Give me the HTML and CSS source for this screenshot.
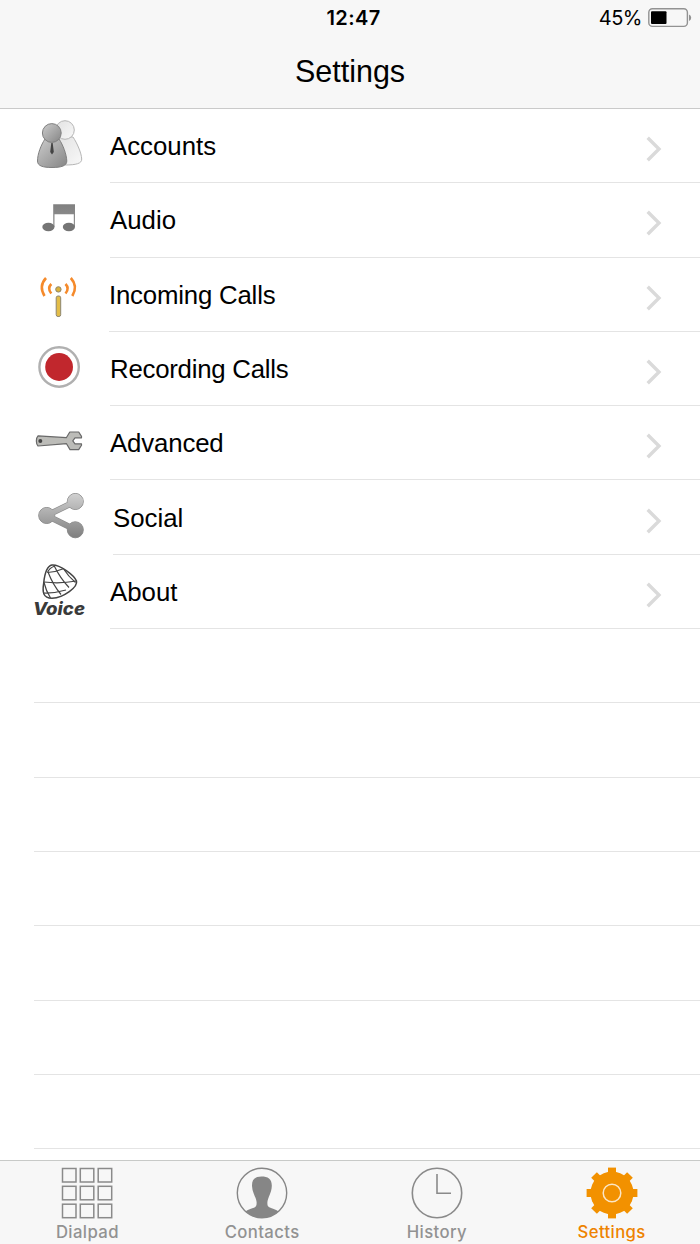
FILE: index.html
```html
<!DOCTYPE html>
<html lang="en">

<head>
    <meta charset="UTF-8">
    <meta name="viewport" content="width=device-width, initial-scale=1.0">
    <title>Settings</title>
    <link rel="stylesheet" href="styles.css">
</head>

<body>
    <div class="screen">
        <header>
            <div class="status-bar">
                <span class="time">12:47</span>
                <div class="power">
                    <span>45%</span>
                    <svg class="battery" width="44" height="20" viewBox="0 0 44 20">
                        <rect x="0.8" y="0.8" width="38.6" height="17.6" rx="3.6" fill="none" stroke="#929292" stroke-width="1.4"/>
                        <rect x="3" y="3.2" width="15.5" height="12.8" rx="1" fill="#000"/>
                        <path d="M41 6.5 Q43.2 7.4 43.2 9.7 Q43.2 12 41 12.9 Z" fill="#929292"/>
                    </svg>
                </div>
            </div>
            <h1>Settings</h1>
        </header>

        <!-- Settings list -->
        <ul class="list">
            <li class="row">
                <svg class="icon" viewBox="0 0 60 74">
                    <defs>
                        <linearGradient id="front" x1="0" y1="0" x2="1" y2="1">
                            <stop offset="0" stop-color="#ccc"/>
                            <stop offset="1" stop-color="#858585"/>
                        </linearGradient>
                        <linearGradient id="back" x1="0" y1="0" x2="1" y2="1">
                            <stop offset="0" stop-color="#e2e2e2"/>
                            <stop offset="1" stop-color="#f8f8f8"/>
                        </linearGradient>
                    </defs>
                    <path d="M28 28 L43 28 C47 34 51.5 44 51.7 50 C52 54.5 46 56 35 56 Z" fill="url(#back)" stroke="#b5b5b5"/>
                    <circle cx="35" cy="21" r="9.3" fill="url(#back)" stroke="#b5b5b5"/>
                    <path d="M15 30 C11 36 7.5 45 7.5 52 C7.5 57 13 58.5 22 58.5 C31 58.5 36.8 57 36.8 52 C36.5 45 33 36 29 30 Z" fill="url(#front)" stroke="#808080"/>
                    <circle cx="21.8" cy="24" r="9.4" fill="url(#front)" stroke="#808080"/>
                    <path d="M21.3 34 H22.7 L23.8 43 L22 45.5 L20.2 43 Z" fill="#444"/>
                </svg>
                <div class="cell">Accounts<svg class="chevron" viewBox="0 0 16 26"><path d="M1.7 1.7 L13 13 L1.7 24.3"/></svg></div>
            </li>
            <li class="row">
                <svg class="icon" viewBox="0 0 60 74">
                    <defs>
                        <linearGradient id="note" x1="0" y1="0" x2="0" y2="1">
                            <stop offset="0" stop-color="#808080"/>
                            <stop offset="1" stop-color="#939393"/>
                        </linearGradient>
                    </defs>
                    <path d="M23.2 21.2 H45 V44 H43.8 V31.2 H24.5 V44 H23.2 Z" fill="url(#note)"/>
                    <ellipse cx="18.4" cy="44" rx="6.1" ry="4.2" fill="#757575"/>
                    <ellipse cx="38.9" cy="44" rx="6.1" ry="4.2" fill="#757575"/>
                </svg>
                <div class="cell">Audio<svg class="chevron" viewBox="0 0 16 26"><path d="M1.7 1.7 L13 13 L1.7 24.3"/></svg></div>
            </li>
            <li class="row incoming">
                <svg class="icon" viewBox="0 0 60 74">
                    <g fill="none" stroke="#f58a2b" stroke-width="2.6">
                        <path d="M21.3 26 Q17 30.5 21.3 35.5"/>
                        <path d="M35.5 26 Q39.8 30.5 35.5 35.5"/>
                        <path d="M16 20 Q8.5 28 14.5 38"/>
                        <path d="M40.8 20 Q48.3 28 42.3 38"/>
                    </g>
                    <circle cx="28.4" cy="31.4" r="2.7" fill="#d9b23c" stroke="#8d8570"/>
                    <rect x="26.2" y="38" width="4.5" height="20.5" rx="1.8" fill="#e3bd48" stroke="#8d8570"/>
                </svg>
                <div class="cell">Incoming Calls<svg class="chevron" viewBox="0 0 16 26"><path d="M1.7 1.7 L13 13 L1.7 24.3"/></svg></div>
            </li>
            <li class="row recording">
                <svg class="icon" viewBox="0 0 60 74">
                    <circle cx="29.1" cy="35" r="19.7" fill="#fff" stroke="#b0b0b0" stroke-width="2.4"/>
                    <circle cx="29.1" cy="35" r="13.9" fill="#c1272d"/>
                </svg>
                <div class="cell">Recording Calls<svg class="chevron" viewBox="0 0 16 26"><path d="M1.7 1.7 L13 13 L1.7 24.3"/></svg></div>
            </li>
            <li class="row advanced">
                <svg class="icon" viewBox="0 0 60 74">
                    <path d="M8 29.8 L36.3 31.7 L39.8 26 H48.7 L51.5 30.4 V31.8 H45 L42.8 34.8 L45 37.8 H51.5 V39.2 L48.7 43.6 H40 L36.5 37.7 L8 40 C5.8 38 5.8 32 8 29.8 Z" fill="#bcbcb8" stroke="#696969" stroke-width="1.2" stroke-linejoin="round"/>
                    <circle cx="10.3" cy="34.9" r="2" fill="#444"/>
                </svg>
                <div class="cell">Advanced<svg class="chevron" viewBox="0 0 16 26"><path d="M1.7 1.7 L13 13 L1.7 24.3"/></svg></div>
            </li>
            <li class="row social">
                <svg class="icon" viewBox="0 0 60 74">
                    <defs>
                        <linearGradient id="share" gradientUnits="userSpaceOnUse" x1="0" y1="13" x2="0" y2="58">
                            <stop offset="0" stop-color="#d2d2d2"/>
                            <stop offset="1" stop-color="#7e7e7e"/>
                        </linearGradient>
                    </defs>
                    <g fill="#8c8c8c" stroke="#8c8c8c">
                        <path d="M45.3 21.5 L16.7 35.5 L45.3 49.8" fill="none" stroke-width="6.2"/>
                        <circle cx="45.3" cy="21.5" r="8"/>
                        <circle cx="16.7" cy="35.5" r="8"/>
                        <circle cx="45.3" cy="49.8" r="8"/>
                    </g>
                    <g fill="url(#share)">
                        <path d="M45.3 21.5 L16.7 35.5 L45.3 49.8" fill="none" stroke="url(#share)" stroke-width="4.8"/>
                        <circle cx="45.3" cy="21.5" r="7.8"/>
                        <circle cx="16.7" cy="35.5" r="7.8"/>
                        <circle cx="45.3" cy="49.8" r="7.8"/>
                    </g>
                </svg>
                <div class="cell">Social<svg class="chevron" viewBox="0 0 16 26"><path d="M1.7 1.7 L13 13 L1.7 24.3"/></svg></div>
            </li>
            <li class="row">
                <svg class="icon" viewBox="0 0 60 74">
                    <g fill="none" stroke="#444" stroke-width="1.2">
                        <path d="M22 10 C30 9.5 44 20 46.5 26 C48 32 34 42.5 22 43.3 C13 43.3 12.2 37 13.7 28 C14.5 20 17 11 22 10 Z" stroke-width="1.5"/>
                        <path d="M17.5 17.5 Q26 17 34 13.5"/>
                        <path d="M14 27 Q30 29 46.5 26"/>
                        <path d="M13.3 38 Q24 38.5 36 35"/>
                        <path d="M24 10.5 Q30 23 39 32.5"/>
                        <path d="M18 17 Q23 30 31 39.5"/>
                        <path d="M14 27.5 Q16 36 20.5 43"/>
                        <path d="M34 14.5 Q38 21 45.5 27.5"/>
                        <path d="M17.5 17.5 Q19 13 25 11"/>
                    </g>
                    <text class="logo-text" x="3" y="60.2" textLength="52" lengthAdjust="spacingAndGlyphs">Voice</text>
                </svg>
                <div class="cell">About<svg class="chevron" viewBox="0 0 16 26"><path d="M1.7 1.7 L13 13 L1.7 24.3"/></svg></div>
            </li>
            <!-- Empty rows down to the tab bar -->
            <li class="row empty"></li>
            <li class="row empty"></li>
            <li class="row empty"></li>
            <li class="row empty"></li>
            <li class="row empty"></li>
            <li class="row empty"></li>
            <li class="row empty"></li>
        </ul>

        <nav class="tabs">
            <a class="tab">
                <svg viewBox="0 0 52 52">
                    <g fill="none" stroke="#8a8a8a" stroke-width="1.5">
                        <rect x="1.5" y="1.5" width="13.5" height="13.5"/>
                        <rect x="19.3" y="1.5" width="13.5" height="13.5"/>
                        <rect x="37.2" y="1.5" width="13.5" height="13.5"/>
                        <rect x="1.5" y="19.3" width="13.5" height="13.5"/>
                        <rect x="19.3" y="19.3" width="13.5" height="13.5"/>
                        <rect x="37.2" y="19.3" width="13.5" height="13.5"/>
                        <rect x="1.5" y="37.2" width="13.5" height="13.5"/>
                        <rect x="19.3" y="37.2" width="13.5" height="13.5"/>
                        <rect x="37.2" y="37.2" width="13.5" height="13.5"/>
                    </g>
                </svg>
                <span>Dialpad</span>
            </a>
            <a class="tab">
                <svg viewBox="0 0 52 52">
                    <circle cx="26" cy="26" r="24.7" fill="none" stroke="#868686" stroke-width="1.4"/>
                    <path d="M25.5 9.5 C32 9.5 36 12 35.8 19 C35.6 26 32 30 31.4 35 C31.2 39 32 40 35 41 C38 42 40 42.5 42.5 44.5 C38 48.5 32.5 50.7 26 50.7 C19.5 50.7 14 48.5 9.5 44.5 C12 42.5 14 42 17 41 C20 40 20.8 39 20.6 35 C20 30 16.3 26 16 19 C15.8 12 19.5 9.5 25.5 9.5 Z" fill="#868686"/>
                </svg>
                <span>Contacts</span>
            </a>
            <a class="tab">
                <svg viewBox="0 0 52 52">
                    <circle cx="26" cy="26" r="24.7" fill="none" stroke="#8a8a8a" stroke-width="1.6"/>
                    <path d="M26 7 V26.3 H40" fill="none" stroke="#8a8a8a" stroke-width="1.6"/>
                </svg>
                <span>History</span>
            </a>
            <a class="tab active">
                <svg viewBox="0 0 52 52">
                    <g fill="#f29100">
                        <circle cx="26" cy="26" r="21.5"/>
                        <rect x="22" y="0.6" width="8" height="50.8"/>
                        <rect x="0.6" y="22" width="50.8" height="8"/>
                        <rect x="22" y="0.6" width="8" height="50.8" transform="rotate(45 26 26)"/>
                        <rect x="22" y="0.6" width="8" height="50.8" transform="rotate(-45 26 26)"/>
                    </g>
                    <circle cx="26" cy="26" r="8.8" fill="none" stroke="#fbe6c6" stroke-width="1.5"/>
                </svg>
                <span>Settings</span>
            </a>
        </nav>
    </div>
</body>

</html>
```
FILE: styles.css
```css
* {
    box-sizing: border-box;
}

body {
    margin: 0;
    background-color: #fff;
    font-family: "Liberation Sans", Arial, sans-serif;
    color: #000;
}

.screen {
    display: flex;
    flex-direction: column;
    width: 700px;
    height: 1244px;
    overflow: hidden;
}

/* Header */
header {
    flex: none;
    height: 109px;
    background-color: #f7f7f7;
    border-bottom: 1px solid #cacaca;
}

.status-bar {
    display: grid;
    grid-template-columns: 1fr auto 1fr;
    align-items: center;
    height: 36px;
    padding: 0 8px 0 15px;
    font-family: Inter, sans-serif;
    font-size: 20px;
}

.time {
    grid-column: 2;
    font-weight: 600;
    letter-spacing: 0.4px;
}

.power {
    display: flex;
    justify-content: flex-end;
    align-items: center;
    gap: 6px;
    letter-spacing: -0.5px;
}

.battery {
    margin-top: -1px;
}

h1 {
    margin: 0;
    font-size: 30.5px;
    font-weight: normal;
    line-height: 70px;
    text-align: center;
}

/* List */
.list {
    flex: 1;
    min-height: 0;
    margin: 0;
    padding: 0;
    overflow: hidden;
    list-style: none;
}

.row {
    display: flex;
    height: 74.3px;
    padding-left: 30px;
}

.icon {
    flex: none;
    width: 60px;
    height: 74px;
    margin-right: 20px;
}

.cell {
    display: flex;
    flex: 1;
    justify-content: space-between;
    align-items: center;
    padding-top: 2px;
    padding-right: 38px;
    border-bottom: 1px solid #e4e4e4;
    font-size: 25.8px;
}

.incoming .icon {
    margin-right: 19px;
}

.incoming .cell {
    letter-spacing: -0.2px;
}

.recording .cell {
    letter-spacing: -0.25px;
}

.advanced .cell {
    letter-spacing: -0.15px;
}

.social .icon {
    margin-right: 23px;
}

.chevron {
    width: 16px;
    height: 26px;
    margin-top: 5px;
    fill: none;
    stroke: #dadada;
    stroke-width: 3.4;
}

.logo-text {
    fill: #3a3a3a;
    font-family: Inter, sans-serif;
    font-size: 17.5px;
    font-style: italic;
    font-weight: 800;
}

.empty {
    margin-left: 34px;
    padding: 0;
    border-bottom: 1px solid #e4e4e4;
}

/* Tab bar */
.tabs {
    display: flex;
    flex: none;
    height: 84px;
    padding-right: 1px;
    background-color: #f7f7f7;
    border-top: 1px solid #c8cac8;
}

.tab {
    display: flex;
    flex: 1;
    flex-direction: column;
    align-items: center;
    gap: 2px;
    padding-top: 6px;
    color: #929292;
    font-family: Inter, sans-serif;
    font-size: 16.7px;
    font-weight: 500;
    letter-spacing: 0.4px;
    line-height: 22px;
}

.tab svg {
    flex: none;
    width: 52px;
    height: 52px;
}

.active {
    color: #ee8300;
}
```
